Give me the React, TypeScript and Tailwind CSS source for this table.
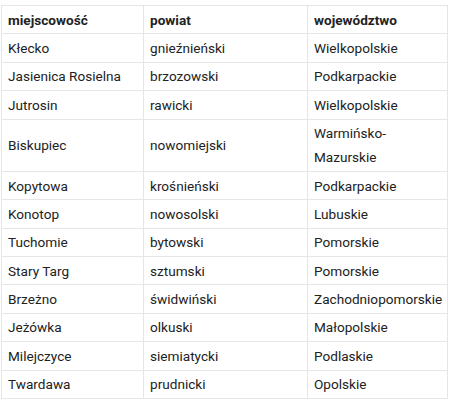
const rows: [string, string, string][] = [
  ["Kłecko", "gnieźnieński", "Wielkopolskie"],
  ["Jasienica Rosielna", "brzozowski", "Podkarpackie"],
  ["Jutrosin", "rawicki", "Wielkopolskie"],
  ["Biskupiec", "nowomiejski", "Warmińsko-Mazurskie"],
  ["Kopytowa", "krośnieński", "Podkarpackie"],
  ["Konotop", "nowosolski", "Lubuskie"],
  ["Tuchomie", "bytowski", "Pomorskie"],
  ["Stary Targ", "sztumski", "Pomorskie"],
  ["Brzeżno", "świdwiński", "Zachodniopomorskie"],
  ["Jeżówka", "olkuski", "Małopolskie"],
  ["Milejczyce", "siemiatycki", "Podlaskie"],
  ["Twardawa", "prudnicki", "Opolskie"],
];

const cell = "border border-[#e6e6e6] px-[6px] py-[1.7px] align-middle";

export default function App() {
  return (
    <div className="bg-white w-[452px] h-[402px] pt-[5px] pl-[1px] font-['Roboto',sans-serif] text-[13.6px] leading-[24px] text-[#222]">
      <table className="border-collapse w-[446px] table-fixed">
        <colgroup>
          <col className="w-[142px]" />
          <col className="w-[164px]" />
          <col className="w-[140px]" />
        </colgroup>
        <thead>
          <tr>
            <th className={cell + " text-left font-bold"}>miejscowość</th>
            <th className={cell + " text-left font-bold"}>powiat</th>
            <th className={cell + " text-left font-bold"}>województwo</th>
          </tr>
        </thead>
        <tbody>
          {rows.map(([town, county, region]) => (
            <tr key={town}>
              <td className={cell}>{town}</td>
              <td className={cell}>{county}</td>
              <td className={cell}>{region}</td>
            </tr>
          ))}
        </tbody>
      </table>
    </div>
  );
}
